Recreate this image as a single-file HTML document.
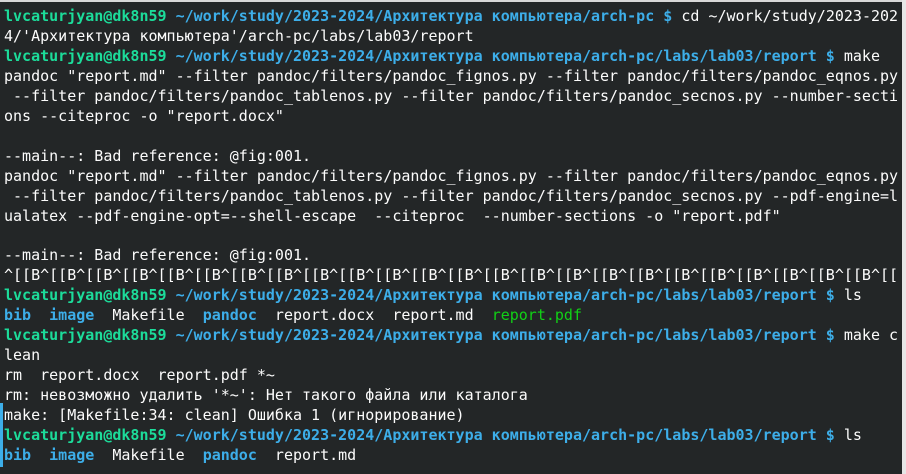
<!DOCTYPE html>
<html><head><meta charset="utf-8"><style>
html,body{margin:0;padding:0;background:#232627;width:906px;height:474px;overflow:hidden}
#t{position:absolute;left:0;top:2px;width:902px;height:472px;background:#232627;overflow:hidden}
pre{margin:0;padding:5px 0 0 4px;font-family:"DejaVu Sans Mono","Liberation Mono",monospace;font-size:15px;line-height:19.95px;color:#fcfcfc;white-space:pre}
.g{color:#1cdc9a;font-weight:bold}.b{color:#3daee9;font-weight:bold}.p{color:#11d116}
#top{position:absolute;left:0;top:0;width:906px;height:2px;background:#d8d8d8}
#rs{position:absolute;right:0;top:0;width:4px;height:474px;background:#e6e6e6}
#lb{position:absolute;left:0;top:403px;width:3px;height:64px;background:#3daee9}
</style></head><body>
<div id="top"></div><div id="rs"></div>
<div id="t"><pre><span class="g">lvcaturjyan@dk8n59</span> <span class="b">~/work/study/2023-2024/Архитектура компьютера/arch-pc $</span> cd ~/work/study/2023-202
4/'Архитектура компьютера'/arch-pc/labs/lab03/report
<span class="g">lvcaturjyan@dk8n59</span> <span class="b">~/work/study/2023-2024/Архитектура компьютера/arch-pc/labs/lab03/report $</span> make
pandoc "report.md" --filter pandoc/filters/pandoc_fignos.py --filter pandoc/filters/pandoc_eqnos.py
 --filter pandoc/filters/pandoc_tablenos.py --filter pandoc/filters/pandoc_secnos.py --number-secti
ons --citeproc -o "report.docx"

--main--: Bad reference: @fig:001.
pandoc "report.md" --filter pandoc/filters/pandoc_fignos.py --filter pandoc/filters/pandoc_eqnos.py
 --filter pandoc/filters/pandoc_tablenos.py --filter pandoc/filters/pandoc_secnos.py --pdf-engine=l
ualatex --pdf-engine-opt=--shell-escape  --citeproc  --number-sections -o "report.pdf"

--main--: Bad reference: @fig:001.
^[[B^[[B^[[B^[[B^[[B^[[B^[[B^[[B^[[B^[[B^[[B^[[B^[[B^[[B^[[B^[[B^[[B^[[B^[[B^[[B^[[B^[[B^[[B^[[B^[[
<span class="g">lvcaturjyan@dk8n59</span> <span class="b">~/work/study/2023-2024/Архитектура компьютера/arch-pc/labs/lab03/report $</span> ls
<span class="b">bib</span>  <span class="b">image</span>  Makefile  <span class="b">pandoc</span>  report.docx  report.md  <span class="p">report.pdf</span>
<span class="g">lvcaturjyan@dk8n59</span> <span class="b">~/work/study/2023-2024/Архитектура компьютера/arch-pc/labs/lab03/report $</span> make c
lean
rm  report.docx  report.pdf *~
rm: невозможно удалить '*~': Нет такого файла или каталога
make: [Makefile:34: clean] Ошибка 1 (игнорирование)
<span class="g">lvcaturjyan@dk8n59</span> <span class="b">~/work/study/2023-2024/Архитектура компьютера/arch-pc/labs/lab03/report $</span> ls
<span class="b">bib</span>  <span class="b">image</span>  Makefile  <span class="b">pandoc</span>  report.md</pre></div>
<div id="lb"></div>
</body></html>
